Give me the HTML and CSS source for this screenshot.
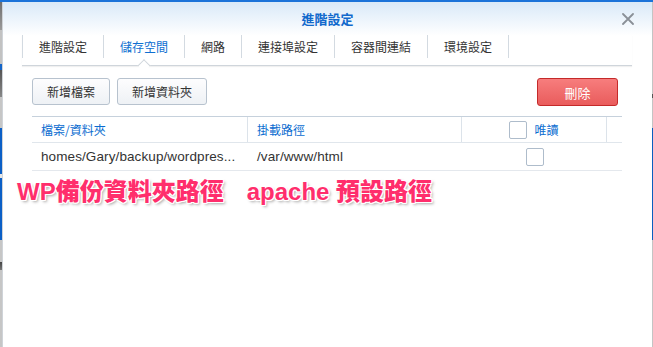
FILE: index.html
```html
<!DOCTYPE html>
<html lang="zh-Hant">
<head>
<meta charset="utf-8">
<title>進階設定</title>
<link rel="stylesheet" href="styles.css">
</head>
<body>
<div class="topbar"></div>
<div class="screen">
  <div class="edge edge-left"></div>
  <div class="dialog">
    <div class="header">
      <div class="spacer"></div>
      <div class="title">進階設定</div>
      <div class="close">
        <svg width="12" height="12" viewBox="0 0 12 12"><path d="M1 1 L11 11 M11 1 L1 11" stroke="#8a9097" stroke-width="1.8" stroke-linecap="round" fill="none"/></svg>
      </div>
    </div>
    <div class="tabs">
      <div class="tab">進階設定</div>
      <div class="tab active">儲存空間</div>
      <div class="tab">網路</div>
      <div class="tab">連接埠設定</div>
      <div class="tab">容器間連結</div>
      <div class="tab">環境設定</div>
    </div>
    <div class="content">
      <div class="toolbar">
        <div class="btn-group">
          <button class="btn">新增檔案</button>
          <button class="btn">新增資料夾</button>
        </div>
        <button class="btn btn-danger">刪除</button>
      </div>
      <div class="grid">
        <div class="grid-head">
          <div class="cell">檔案/資料夾</div>
          <div class="cell">掛載路徑</div>
          <div class="cell cell-center"><span class="checkbox"></span><span>唯讀</span></div>
          <div class="cell cell-last"></div>
        </div>
        <div class="grid-row">
          <div class="cell">homes/Gary/backup/wordpres...</div>
          <div class="cell">/var/www/html</div>
          <div class="cell cell-center"><span class="checkbox"></span></div>
          <div class="cell cell-last"></div>
        </div>
      </div>
    </div>
    <div class="annotation">
      <span>WP備份資料夾路徑</span>
      <span>apache 預設路徑</span>
    </div>
  </div>
  <div class="edge edge-right"></div>
</div>
</body>
</html>
```
FILE: styles.css
```css
* { box-sizing: border-box; margin: 0; padding: 0; }
html, body { width: 653px; height: 347px; overflow: hidden; background: #fff; }
body {
  font-family: "Liberation Sans", "Noto Sans CJK TC", sans-serif;
  font-size: 12px;
  color: #333;
}
.topbar { height: 2px; background: #1b73d9; }
.screen { display: flex; height: 345px; }
.edge-left {
  width: 2px;
  background: linear-gradient(to bottom,
    #6f6f6f 0, #9a9a9a 28px, #c2c2c2 28px, #c2c2c2 62px, #1565c8 62px, #1565c8 68px,
    #555 68px, #888 95px, #c6c6c6 95px, #c6c6c6 126px,
    #0b5fc6 126px, #0b5fc6 172px, #e6e6e6 172px, #e6e6e6 176px, #0b5fc6 176px, #0b5fc6 238px,
    #c6c6c6 238px, #c6c6c6 260px, #444 260px, #777 268px, #c6c6c6 268px);
}
.edge-right {
  width: 1px;
  background: linear-gradient(to bottom,
    #c4c4c4 0, #c4c4c4 92px, #555 92px, #555 96px, #c4c4c4 96px, #c4c4c4 126px,
    #0b5fbf 126px, #0b5fbf 238px, #c4c4c4 238px);
}
.dialog {
  flex: 1;
  display: flex;
  flex-direction: column;
  border-left: 1px solid #cfd3d8;
  background: linear-gradient(to bottom, #d9e9f8 0, #ffffff 34px);
}
.header {
  height: 33px;
  display: grid;
  grid-template-columns: 1fr auto 1fr;
  align-items: center;
}
.title {
  font-family: "Noto Sans CJK TC", sans-serif;
  font-weight: 700;
  font-size: 13px;
  color: #1169cc;
}
.close {
  justify-self: end;
  margin-right: 18px;
  width: 12px;
  height: 12px;
  display: flex;
}
.tabs {
  display: flex;
  margin: 0 20px 0 19px;
  padding-bottom: 7px;
  border-bottom: 1px solid #cfd5db;
  box-shadow: 0 1px 1px rgba(0, 0, 0, 0.06);
}
.tab {
  position: relative;
  height: 23px;
  line-height: 23px;
  padding: 0 16px;
  border-right: 1px solid #d3dae1;
  font-family: "Noto Sans CJK TC", sans-serif;
  font-size: 12px;
  color: #333;
}
.tab:first-child { border-left: 1px solid #d3dae1; }
.tab.active { color: #0f6fd1; }
.tab.active::after {
  content: "";
  position: absolute;
  left: 50%;
  top: calc(100% + 3px);
  width: 8px;
  height: 8px;
  background: #fff;
  border-top: 1px solid #cfd5db;
  border-left: 1px solid #cfd5db;
  transform: translateX(-50%) rotate(45deg);
}
.content { padding: 12px 30px 0 29px; }
.toolbar {
  display: flex;
  justify-content: space-between;
  padding-right: 4px;
}
.btn-group { display: flex; gap: 7px; }
.btn {
  height: 27px;
  padding: 0 14px;
  border: 1px solid #b7c2ce;
  border-radius: 3px;
  background: linear-gradient(to bottom, #fdfdfe, #eef1f5);
  font-family: "Noto Sans CJK TC", sans-serif;
  font-size: 12px;
  color: #333;
}
.btn-danger {
  width: 81px;
  height: 28px;
  border-color: #c42a2a;
  background: linear-gradient(to bottom, #f77d7d, #e95c5c);
  color: #fff;
  font-size: 13px;
}
.grid { margin-top: 10px; }
.grid-head, .grid-row {
  display: grid;
  grid-template-columns: 216px 214px 145px 1fr;
}
.grid-head {
  border-top: 1px solid #c6d1dc;
  border-bottom: 1px solid #e0e6ec;
  height: 27px;
}
.grid-head .cell {
  border-right: 1px solid #dce3ea;
  font-family: "Noto Sans CJK TC", sans-serif;
  font-size: 12px;
  color: #0a6cd0;
  line-height: 25px;
}
.grid-head .cell-last { border-right: none; }
.grid-row {
  height: 28px;
  border-bottom: 1px solid #e4e8ed;
}
.grid-row .cell {
  font-family: "Liberation Sans", sans-serif;
  font-size: 13.5px;
  letter-spacing: 0.1px;
  line-height: 27px;
  color: #333;
  white-space: nowrap;
  overflow: hidden;
}
.cell { padding-left: 9px; }
.cell-center {
  display: flex;
  justify-content: center;
  align-items: center;
  gap: 7px;
  padding-left: 0;
}
.checkbox {
  display: block;
  width: 18px;
  height: 18px;
  border: 1px solid #aebccb;
  border-radius: 2px;
  background: #fff;
}
.annotation {
  display: flex;
  gap: 23px;
  margin: 6px 0 0 14px;
  font-family: "Liberation Sans", "Noto Sans CJK TC", sans-serif;
  font-weight: 900;
  font-size: 24px;
  line-height: 29px;
  color: #ff2e6c;
  white-space: pre;
  text-shadow:
    1px 0 0 #fff, -1px 0 0 #fff, 0 1px 0 #fff, 0 -1px 0 #fff,
    1px 1px 0 #fff, -1px -1px 0 #fff, 1px -1px 0 #fff, -1px 1px 0 #fff,
    2px 2px 3px rgba(0, 0, 0, 0.35);
}
```
